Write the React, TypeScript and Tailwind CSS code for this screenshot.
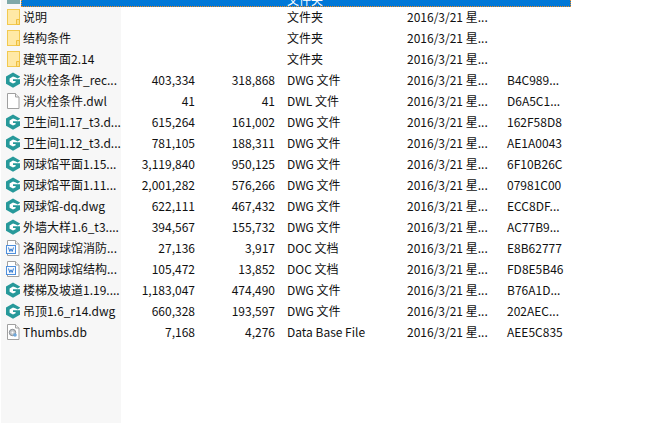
import React from "react";

type Kind = "folder" | "dwg" | "dwl" | "doc" | "db";

interface FileRow {
  kind: Kind;
  name: string;
  size?: string;
  packed?: string;
  type: string;
  crc?: string;
}

const rows: FileRow[] = [
  { kind: "folder", name: "说明", type: "文件夹" },
  { kind: "folder", name: "结构条件", type: "文件夹" },
  { kind: "folder", name: "建筑平面2.14", type: "文件夹" },
  { kind: "dwg", name: "消火栓条件_rec...", size: "403,334", packed: "318,868", type: "DWG 文件", crc: "B4C989..." },
  { kind: "dwl", name: "消火栓条件.dwl", size: "41", packed: "41", type: "DWL 文件", crc: "D6A5C1..." },
  { kind: "dwg", name: "卫生间1.17_t3.d...", size: "615,264", packed: "161,002", type: "DWG 文件", crc: "162F58D8" },
  { kind: "dwg", name: "卫生间1.12_t3.d...", size: "781,105", packed: "188,311", type: "DWG 文件", crc: "AE1A0043" },
  { kind: "dwg", name: "网球馆平面1.15...", size: "3,119,840", packed: "950,125", type: "DWG 文件", crc: "6F10B26C" },
  { kind: "dwg", name: "网球馆平面1.11...", size: "2,001,282", packed: "576,266", type: "DWG 文件", crc: "07981C00" },
  { kind: "dwg", name: "网球馆-dq.dwg", size: "622,111", packed: "467,432", type: "DWG 文件", crc: "ECC8DF..." },
  { kind: "dwg", name: "外墙大样1.6_t3....", size: "394,567", packed: "155,732", type: "DWG 文件", crc: "AC77B9..." },
  { kind: "doc", name: "洛阳网球馆消防...", size: "27,136", packed: "3,917", type: "DOC 文档", crc: "E8B62777" },
  { kind: "doc", name: "洛阳网球馆结构...", size: "105,472", packed: "13,852", type: "DOC 文档", crc: "FD8E5B46" },
  { kind: "dwg", name: "楼梯及坡道1.19....", size: "1,183,047", packed: "474,490", type: "DWG 文件", crc: "B76A1D..." },
  { kind: "dwg", name: "吊顶1.6_r14.dwg", size: "660,328", packed: "193,597", type: "DWG 文件", crc: "202AEC..." },
  { kind: "db", name: "Thumbs.db", size: "7,168", packed: "4,276", type: "Data Base File", crc: "AEE5C835" },
];

function FileIcon({ kind }: { kind: Kind }) {
  if (kind === "folder") {
    return (
      <svg width="16" height="18" viewBox="0 0 16 18">
        <rect x="2.5" y="1.5" width="12" height="15" fill="#ffe9a6" stroke="#f2c94f" />
        <path d="M11.5 16.5v-5h3v5z" fill="#fbe08a" stroke="#f0bf3e" />
      </svg>
    );
  }
  if (kind === "dwg") {
    return (
      <svg width="16" height="18" viewBox="0 0 16 18">
        {/* chunky teal G built from a hexagon, with the white notch cut out of it */}
        <path d="M8 1.5 15 5.4v7.4l-7 3.9-7-3.9V5.4z" fill="#27999a" />
        <path d="M8 5.6 4.6 7.4v3.4L8 12.6l2.6-1.4V10H8V8.2h7V5.9L12.6 7.6 10.8 6.6z" fill="#fff" />
      </svg>
    );
  }
  return (
    <svg width="16" height="18" viewBox="0 0 16 18">
      <path d="M2.5 1.5h8l3.5 3.5v11.5H2.5z" fill="#fff" stroke="#a0a0a0" />
      <path d="M10.5 1.5V5H14" fill="#eeeeee" stroke="#a0a0a0" />
      {kind === "doc" && (
        <>
          <rect x="1.5" y="6.5" width="9" height="8" fill="#f4f8fe" stroke="#4f8fdc" />
          <path d="M3.5 8.5 4.8 12.5 6 9.8 7.2 12.5 8.5 8.5" fill="none" stroke="#2f78d0" strokeWidth="1" />
        </>
      )}
      {kind === "db" && (
        <>
          <circle cx="7.5" cy="9.5" r="3.2" fill="#c4c8cc" stroke="#858a90" />
          <circle cx="10" cy="12" r="1.8" fill="#6fa8dc" />
          <circle cx="7.5" cy="9.5" r="1" fill="#fff" />
        </>
      )}
    </svg>
  );
}

function Row({ row }: { row: FileRow }) {
  return (
    <div className="flex h-[21px] whitespace-nowrap">
      <div className="ml-px flex w-[120px] shrink-0 items-center bg-[#f7f7f7] pb-[2px]">
        <div className="ml-[4px] flex w-[18px] shrink-0 items-center">
          <FileIcon kind={row.kind} />
        </div>
        <span>{row.name}</span>
      </div>
      <span className="flex w-[74px] shrink-0 items-center justify-end pb-[2px]">{row.size}</span>
      <span className="flex w-[80px] shrink-0 items-center justify-end pb-[2px]">{row.packed}</span>
      <span className="ml-[12px] flex w-[120px] shrink-0 items-center pb-[2px]">{row.type}</span>
      <span className="flex w-[100px] shrink-0 items-center pb-[2px]">2016/3/21 星...</span>
      <span className="flex items-center pb-[2px]">{row.crc}</span>
    </div>
  );
}

export default function App() {
  return (
    <div
      className="h-[423px] w-[655px] overflow-hidden bg-white text-[12px] text-[#111111]"
      style={{ fontFamily: '"Noto Sans CJK SC", "Noto Sans", sans-serif' }}
    >
      {/* selected row, cut off by the top of the window */}
      <div className="flex h-[7px] overflow-hidden">
        <div className="ml-px w-[20px] shrink-0 bg-[#f7f7f7] pl-[6px]">
          <div className="h-[4px] w-[13px] bg-[#7fa8a8]" />
        </div>
        <div className="w-[550px] shrink-0 border-x border-b border-dotted border-[#f08a1e] bg-[#0078d7] pl-[265px] leading-[0px] text-white">
          文件夹
        </div>
      </div>
      {rows.map((row) => (
        <Row key={row.name} row={row} />
      ))}
      <div className="ml-px h-[80px] w-[120px] bg-[#f7f7f7]" />
    </div>
  );
}
